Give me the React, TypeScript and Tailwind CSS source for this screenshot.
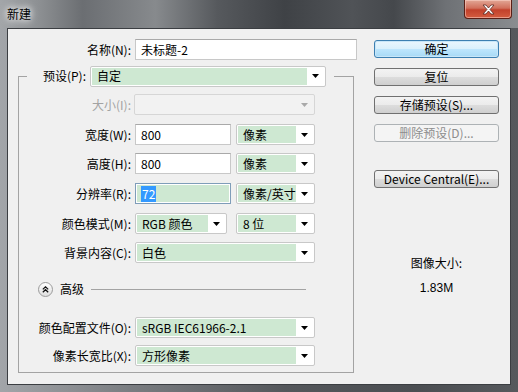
import React from 'react';

const ui = { fontFamily: '"Noto Sans CJK SC", "Noto Sans", sans-serif' };

const Arrow = ({ color = '#000' }: { color?: string }) => (
  <svg width="7" height="4" viewBox="0 0 7 4">
    <path d="M0 0h7L3.5 4z" fill={color} />
  </svg>
);

const Select = ({ value, width, disabled }: { value?: string; width: string; disabled?: boolean }) => (
  <div
    className={`${width} flex h-[21px] rounded-[2px] border p-px ${
      disabled ? 'border-[#d6d6d6] bg-[#f2f2f2]' : 'border-[#c8c8c8] bg-white'
    }`}
  >
    <div className={`flex flex-1 items-center pl-[5px] ${disabled ? '' : 'bg-[#cee8d2]'}`}>{value}</div>
    <div className="flex w-[17px] items-center justify-center">
      <Arrow color={disabled ? '#a9a9a9' : '#000'} />
    </div>
  </div>
);

const Input = ({ value, width }: { value: string; width: string }) => (
  <div className={`${width} flex h-[21px] items-center border border-[#c8c8c8] border-t-[#a9a9a9] bg-white pl-[5px]`}>
    {value}
  </div>
);

const Row = ({
  label,
  children,
  className = '',
  labelClass = '',
}: {
  label: string;
  children: React.ReactNode;
  className?: string;
  labelClass?: string;
}) => (
  <div className={`flex h-[21px] items-center ${className}`}>
    <div className={`w-[116px] pr-[4px] text-right ${labelClass}`}>{label}</div>
    {children}
  </div>
);

const Button = ({ children, primary, disabled, className = '' }: any) => {
  let look =
    'border-[#707070] bg-[linear-gradient(#f3f3f3_0%,#ebebeb_50%,#dddddd_50%,#cfcfcf_100%)] text-black';
  if (primary)
    look =
      'border-[#3c7fb1] bg-[linear-gradient(#eaf6fd_0%,#d9f0fc_50%,#bee6fd_50%,#a7d9f5_100%)] text-black shadow-[inset_0_0_0_1px_#c8e6f8]';
  if (disabled) look = 'border-[#adb2b5] bg-[#f4f4f4] text-[#8d8d8d]';
  return (
    <div className={`flex h-[18px] w-[125px] items-center justify-center rounded-[3px] border leading-none ${look} ${className}`}>
      {children}
    </div>
  );
};

export default function App() {
  return (
    <div
      style={ui}
      className="flex h-[392px] w-[518px] flex-col bg-[linear-gradient(90deg,#a2a5a9_0%,#7a7d81_25%,#54575b_55%,#4b4e52_80%,#56595d_100%)] text-[12px] leading-[16px] text-black"
    >
      {/* title bar */}
      <div className="relative flex h-[28px] items-center bg-[linear-gradient(90deg,#a3a6a9_0%,#8b8e91_8%,#6b6e72_16%,#878a8d_30%,#56595d_42%,#3f4246_55%,#505357_68%,#45484c_76%,#6e7175_86%,#8a8d90_100%)] pl-[7px]">
        <span className="[text-shadow:0_0_6px_#ffffff,0_0_10px_#ffffff]">新建</span>
        <div className="absolute right-[6px] top-0 flex h-[19px] w-[48px] items-center justify-center rounded-b-[4px] border border-t-0 border-[#5a1f16] bg-[linear-gradient(#e2a796_0%,#d1705c_45%,#c2412b_55%,#d45c3f_100%)] shadow-[inset_0_0_0_1px_rgba(255,220,210,0.5)]">
          <svg width="13" height="11" viewBox="0 0 13 11">
            <path
              d="M1 1h3l2.5 3L9 1h3L8 5.5l4 4.5H9L6.5 7 4 10H1l4-4.5z"
              fill="#ffffff"
              stroke="#5b2a22"
              strokeWidth="0.8"
              strokeLinejoin="round"
            />
          </svg>
        </div>
      </div>

      {/* client area */}
      <div className="mx-[7px] flex h-[357px] w-[504px] border border-[#3b3e42] bg-[#f0f0f0]">
        {/* left column */}
        <div className="ml-[10px] flex flex-col pt-[10px]">
          <div className="flex h-[21px] items-center">
            <div className="w-[117px] pr-[4px] text-right">名称(N):</div>
            <Input value="未标题-2" width="w-[222px]" />
          </div>

          <fieldset className="mt-[6px] w-[336px] border border-[#a3a3a3] pb-[6px] pt-[8px]">
            <legend className="ml-[8px] flex h-[20px] items-center pr-[8px]">
              <div className="w-[63px] pr-[4px] text-right">预设(P):</div>
              <Select value="自定" width="w-[236px]" />
            </legend>

            <Row label="大小(I):" labelClass="text-[#a3a3a3]">
              <Select width="w-[181px] -ml-px" disabled />
            </Row>
            <Row label="宽度(W):" className="mt-[9px]">
              <Input value="800" width="w-[96px]" />
              <Select value="像素" width="w-[79px] ml-[5px]" />
            </Row>
            <Row label="高度(H):" className="mt-[8px]">
              <Input value="800" width="w-[96px]" />
              <Select value="像素" width="w-[79px] ml-[5px]" />
            </Row>
            <Row label="分辨率(R):" className="mt-[9px]">
              <div className="flex h-[21px] w-[96px] border border-[#7f9db9] bg-white p-px">
                <div className="flex flex-1 items-center bg-[#cee8d2] pl-[4px]">
                  <span className="bg-[#3399ff] px-px text-white">72</span>
                </div>
              </div>
              <Select value="像素/英寸" width="w-[79px] ml-[5px]" />
            </Row>
            <Row label="颜色模式(M):" className="mt-[9px]">
              <Select value="RGB 颜色" width="w-[92px]" />
              <Select value="8 位" width="w-[79px] ml-[9px]" />
            </Row>
            <Row label="背景内容(C):" className="mt-[8px]">
              <Select value="白色" width="w-[180px]" />
            </Row>

            <div className="mt-[18px] flex h-[16px] items-center pl-[19px]">
              <div className="flex h-[15px] w-[15px] items-center justify-center rounded-full border border-[#9b9b9b] bg-[linear-gradient(#ffffff,#dedede)]">
                <svg width="7" height="7" viewBox="0 0 7 7">
                  <path d="M0.8 3.4 3.5 0.8 6.2 3.4M0.8 6.3 3.5 3.7 6.2 6.3" fill="none" stroke="#111" strokeWidth="1.2" />
                </svg>
              </div>
              <span className="ml-[7px]">高级</span>
              <div className="ml-[7px] h-px w-[215px] bg-[#a3a3a3]" />
            </div>

            <Row label="颜色配置文件(O):" className="mt-[20px]">
              <Select value="sRGB IEC61966-2.1" width="w-[180px]" />
            </Row>
            <Row label="像素长宽比(X):" className="mt-[7px]">
              <Select value="方形像素" width="w-[180px]" />
            </Row>
          </fieldset>
        </div>

        {/* right column */}
        <div className="ml-[17px] flex w-[125px] flex-col pt-[11px]">
          <Button primary>确定</Button>
          <Button className="mt-[10px]">复位</Button>
          <Button className="mt-[10px]">存储预设(S)...</Button>
          <Button className="mt-[10px]" disabled>
            删除预设(D)...
          </Button>
          <Button className="mt-[28px]">Device Central(E)...</Button>

          <div className="mt-[68px] text-center leading-[14px]">图像大小:</div>
          <div className="mt-[11px] text-center leading-[14px]" style={{ fontFamily: '"Liberation Sans", sans-serif' }}>
            1.83M
          </div>
        </div>
      </div>
    </div>
  );
}
